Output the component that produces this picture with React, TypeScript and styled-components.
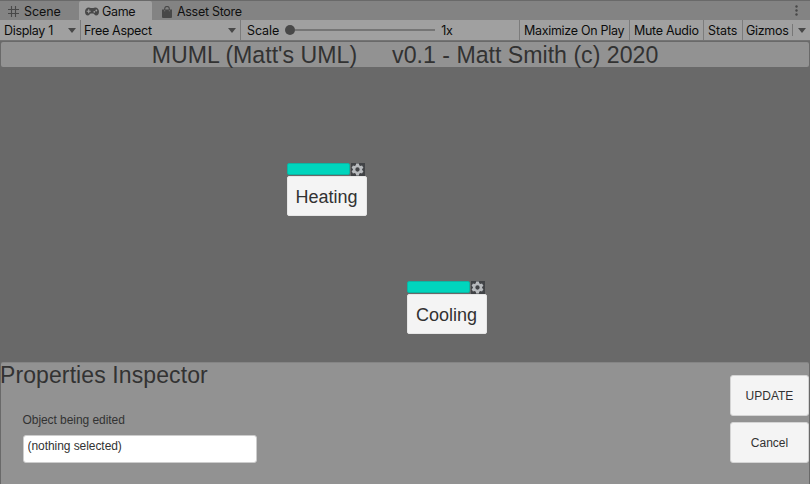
import React from 'react';
import styled, { createGlobalStyle } from 'styled-components';

const GlobalStyle = createGlobalStyle`
  * { box-sizing: border-box; }
  body { margin: 0; background: #696969; overflow: hidden; }
  button, input { font: inherit; color: inherit; border: 0; padding: 0; margin: 0; }
`;

const Window = styled.div`
  width: 810px;
  height: 484px;
  display: flex;
  flex-direction: column;
  background: #696969;
  color: #323232;
  font-family: 'Liberation Sans', Arial, sans-serif;
`;

const TabBar = styled.nav`
  height: 20px;
  flex: none;
  display: flex;
  align-items: stretch;
  background: #838383;
  border-top: 1px solid #696969;
  color: #101010;
  font: 12.5px/20px Inter, sans-serif;
`;

const Tab = styled.button<{ $width: number; $gap: number; $inset: number; $active?: boolean; $spacing: number }>`
  && { padding: 2px 0 0 ${p => p.$inset}px; }
  width: ${p => p.$width}px;
  display: flex;
  align-items: center;
  gap: ${p => p.$gap}px;
  background: ${p => (p.$active ? '#a0a0a0' : 'transparent')};
  border-radius: ${p => (p.$active ? '2px 2px 0 0' : '0')};
  letter-spacing: ${p => p.$spacing}px;
  white-space: nowrap;
  line-height: 18px;
  svg { flex: none; }
`;

const TabMenu = styled.button`
  margin-left: auto;
  width: 27px;
  display: flex;
  align-items: center;
  justify-content: center;
  background: none;
`;

const Toolbar = styled.div`
  height: 21px;
  flex: none;
  display: flex;
  background: #a0a0a0;
  border-bottom: 1px solid #737373;
  color: #0c0c0c;
  font: 12.5px/21px Inter, sans-serif;
`;

const ToolItem = styled.div<{ $width: number; $inset: number; $spacing?: number }>`
  width: ${p => p.$width}px;
  flex: none;
  display: flex;
  align-items: center;
  padding-left: ${p => p.$inset}px;
  letter-spacing: ${p => p.$spacing ?? -0.3}px;
  white-space: nowrap;
  border-right: 1px solid #7c7c7c;
  &:last-child { border-right: 0; }
`;

const Arrow = styled.i`
  margin-left: auto;
  margin-right: 4px;
  border: 4px solid transparent;
  border-top: 5px solid #484848;
  border-bottom: 0;
`;

const Slider = styled.span`
  width: 150px;
  height: 10px;
  margin: 0 6px 0 6px;
  display: flex;
  align-items: center;
  &::before { content: ''; width: 10px; height: 10px; border-radius: 50%; background: #484848; }
  &::after { content: ''; flex: 1; height: 2px; background: #757575; }
`;

const Divider = styled.i`
  width: 1px;
  height: 12px;
  margin-left: auto;
  margin-right: 5px;
  background: #777;
  & + ${Arrow} { margin-left: 0; }
`;

const Banner = styled.header`
  height: 25px;
  flex: none;
  margin: 1px 1px 0;
  display: flex;
  justify-content: center;
  gap: 35px;
  background: #929292;
  border-radius: 2px;
  white-space: nowrap;
  font-size: 23.15px;
  line-height: 27px;
`;

const Canvas = styled.main`
  height: 295px;
  flex: none;
  position: relative;
`;

const Node = styled.section<{ $x: number; $y: number }>`
  position: absolute;
  left: ${p => p.$x}px;
  top: ${p => p.$y}px;
  width: 80px;
`;

const NodeHead = styled.div`
  display: flex;
  justify-content: space-between;
  height: 13px;
  padding-right: 2px;
`;

const Handle = styled.div`
  width: 63px;
  height: 12px;
  border: 1px solid #0cb5a3;
  border-radius: 2px;
  background: #00d5bd;
`;

const Settings = styled.button`
  width: 14px;
  height: 13px;
  background: #414346;
  display: flex;
  align-items: center;
  justify-content: center;
`;

const NodeLabel = styled.div`
  height: 40px;
  background: #f4f4f4;
  border: 1px solid #e6e6e6;
  border-radius: 2px;
  text-align: center;
  font-size: 18px;
  line-height: 40px;
`;

const Inspector = styled.aside`
  flex: 1;
  margin: 0 1px;
  display: flex;
  justify-content: space-between;
  background: #929292;
  border-top: 1px solid #858585;
  border-radius: 2px 2px 0 0;
`;

const Heading = styled.h1`
  margin: 0 0 0 -1px;
  font-size: 23px;
  font-weight: 400;
  line-height: 24px;
  letter-spacing: 0.1px;
`;

const Field = styled.label`
  display: block;
  margin: 25px 0 0 21.5px;
  font-size: 12px;
  line-height: 16px;
  letter-spacing: -0.06px;
`;

const TextInput = styled.input`
  && { padding: 0 4px 7px; letter-spacing: -0.06px; }
  display: block;
  width: 234px;
  height: 28px;
  margin-top: 7px;
  background: #fff;
  border: 1px solid #cdcdcd;
  border-radius: 3px;
`;

const Actions = styled.div`
  width: 79px;
  padding-top: 12px;
  display: flex;
  flex-direction: column;
  gap: 6px;
`;

const Action = styled.button`
  height: 41px;
  flex: none;
  background: #f4f4f4;
  border: 1px solid #d4d4d4;
  border-radius: 3px;
  font-size: 12px;
`;

const HashIcon = () => (
  <svg width="11" height="11" viewBox="0 0 11 11" fill="none" stroke="#484848" strokeWidth="1.1">
    <path d="M3.5 0v11M7.5 0v11M0 3.5h11M0 7.5h11" />
  </svg>
);

const GamepadIcon = () => (
  <svg width="14" height="9" viewBox="0 0 14 9">
    <path d="M3.8.5Q5 .5 5.7 1h2.6Q9 .5 10.2.5C12.4.5 14 2.4 14 4.8S12.8 8.6 11.2 8.6C9.7 8.6 9 6.6 8.2 6.6H5.8C5 6.6 4.3 8.6 2.8 8.6 1.2 8.6 0 7.2 0 4.8S1.6.5 3.8.5Z" fill="#484848" />
    <path d="M3.7 2.3v4M1.7 4.3h4" stroke="#a0a0a0" strokeWidth="1.1" />
    <circle cx="9.3" cy="4.8" r=".9" fill="#a0a0a0" />
    <circle cx="11.3" cy="3.5" r=".9" fill="#a0a0a0" />
  </svg>
);

const BagIcon = () => (
  <svg width="10" height="12" viewBox="0 0 10 12">
    <path d="M2.7 5V2.7a2.3 2.3 0 0 1 4.6 0V5" fill="none" stroke="#484848" strokeWidth="1.1" />
    <path d="M0 3.5h10V11q0 1-1 1H1q-1 0-1-1Z" fill="#484848" />
    <path d="M2.7 4v1.4M7.3 4v1.4" stroke="#777" strokeWidth=".8" />
  </svg>
);

const MoreIcon = () => (
  <svg width="3" height="11" viewBox="0 0 3 11" fill="#484848">
    <circle cx="1.5" cy="1.5" r="1.2" />
    <circle cx="1.5" cy="5.5" r="1.2" />
    <circle cx="1.5" cy="9.5" r="1.2" />
  </svg>
);

const GearIcon = () => (
  <svg width="13" height="13" viewBox="0 0 24 24">
    <path fillRule="evenodd" fill="#b7babd" d="M9.5 1h5l.7 3.2 2 1.2 3.2-1 2.5 4.3-2.4 2.2v2.2l2.4 2.2-2.5 4.3-3.2-1-2 1.2-.7 3.2h-5l-.7-3.2-2-1.2-3.2 1-2.5-4.3 2.4-2.2v-2.2L1.1 8.7l2.5-4.3 3.2 1 2-1.2ZM12 8a4 4 0 1 0 0 8 4 4 0 0 0 0-8Z" />
  </svg>
);

const nodes = [
  { name: 'Heating', x: 286.5, y: 96 },
  { name: 'Cooling', x: 406.5, y: 214 },
];

export default function App() {
  return (
    <>
      <GlobalStyle />
      <Window>
        <TabBar>
          <Tab $width={79} $inset={8} $gap={5} $spacing={-0.1}><HashIcon />Scene</Tab>
          <Tab $width={73} $inset={6} $gap={3} $spacing={-0.35} $active><GamepadIcon />Game</Tab>
          <Tab $width={100} $inset={10} $gap={5} $spacing={-0.3}><BagIcon />Asset Store</Tab>
          <TabMenu aria-label="More"><MoreIcon /></TabMenu>
        </TabBar>
        <Toolbar>
          <ToolItem $width={81} $inset={4}>Display 1<Arrow /></ToolItem>
          <ToolItem $width={160} $inset={3}>Free Aspect<Arrow /></ToolItem>
          <ToolItem $width={279} $inset={6} $spacing={-0.1}>Scale<Slider />1x</ToolItem>
          <ToolItem $width={110} $inset={4}>Maximize On Play</ToolItem>
          <ToolItem $width={74} $inset={4}>Mute Audio</ToolItem>
          <ToolItem $width={39} $inset={4} $spacing={-0.1}>Stats</ToolItem>
          <ToolItem $width={67} $inset={3}>Gizmos<Divider /><Arrow /></ToolItem>
        </Toolbar>
        <Banner>
          <span>MUML (Matt's UML)</span>
          <span>v0.1 - Matt Smith (c) 2020</span>
        </Banner>
        <Canvas>
          {nodes.map(n => (
            <Node key={n.name} $x={n.x} $y={n.y}>
              <NodeHead>
                <Handle />
                <Settings aria-label={`${n.name} settings`}><GearIcon /></Settings>
              </NodeHead>
              <NodeLabel>{n.name}</NodeLabel>
            </Node>
          ))}
        </Canvas>
        <Inspector>
          <div>
            <Heading>Properties Inspector</Heading>
            <Field>
              Object being edited
              <TextInput readOnly value="(nothing selected)" />
            </Field>
          </div>
          <Actions>
            <Action>UPDATE</Action>
            <Action>Cancel</Action>
          </Actions>
        </Inspector>
      </Window>
    </>
  );
}
